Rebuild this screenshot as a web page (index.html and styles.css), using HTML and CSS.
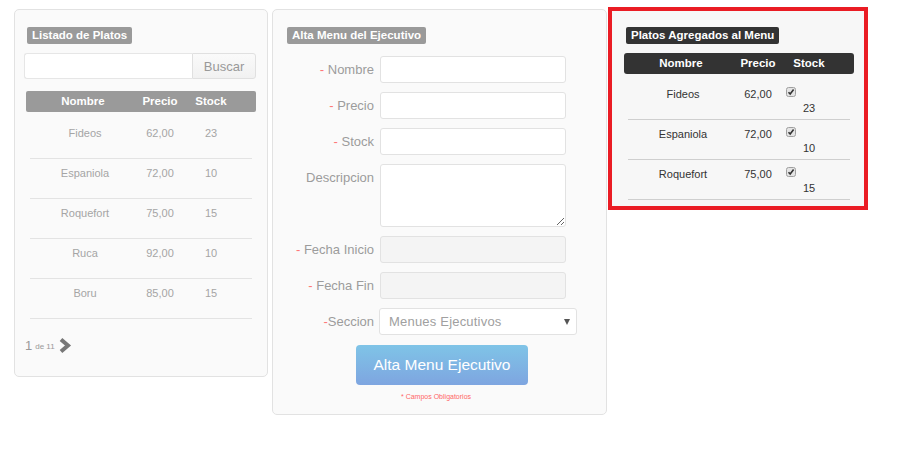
FILE: index.html
```html
<!DOCTYPE html>
<html lang="es">
<head>
<meta charset="utf-8">
<title>Menu Ejecutivo</title>
<link rel="stylesheet" href="styles.css">
</head>
<body>
<div class="page">
  <section class="panel list">
    <div class="badge">Listado de Platos</div>
    <div class="search">
      <input class="search-input" type="text">
      <button class="search-btn">Buscar</button>
    </div>
    <div class="table">
      <div class="thead">
        <span>Nombre</span><span>Precio</span><span>Stock</span>
      </div>
      <div class="tbody">
        <div class="row"><span>Fideos</span><span>62,00</span><span>23</span></div>
        <div class="row"><span>Espaniola</span><span>72,00</span><span>10</span></div>
        <div class="row"><span>Roquefort</span><span>75,00</span><span>15</span></div>
        <div class="row"><span>Ruca</span><span>92,00</span><span>10</span></div>
        <div class="row"><span>Boru</span><span>85,00</span><span>15</span></div>
      </div>
    </div>
    <div class="pager">
      <span class="pg-num">1</span><span class="pg-of">de 11</span>
      <svg class="pg-next" width="14" height="17" viewBox="0 0 14 17"><polyline points="3,2.5 10,8.5 3,14.5" fill="none" stroke="#777" stroke-width="4"/></svg>
    </div>
  </section>

  <section class="panel form">
    <div class="badge">Alta Menu del Ejecutivo</div>
    <div class="fields">
      <label class="field"><span class="lbl"><span class="req">-</span> Nombre</span><input class="inp" type="text"></label>
      <label class="field"><span class="lbl"><span class="req">-</span> Precio</span><input class="inp" type="text"></label>
      <label class="field"><span class="lbl"><span class="req">-</span> Stock</span><input class="inp" type="text"></label>
      <label class="field"><span class="lbl">Descripcion</span><textarea class="inp area"></textarea></label>
      <label class="field"><span class="lbl"><span class="req">-</span> Fecha Inicio</span><input class="inp" type="text" disabled></label>
      <label class="field"><span class="lbl"><span class="req">-</span> Fecha Fin</span><input class="inp" type="text" disabled></label>
      <div class="field"><span class="lbl"><span class="req">-</span>Seccion</span><div class="select">Menues Ejecutivos</div></div>
    </div>
    <button class="submit">Alta Menu Ejecutivo</button>
    <div class="note">* Campos Obligatorios</div>
  </section>

  <section class="panel added">
    <div class="badge dark">Platos Agregados al Menu</div>
    <div class="table">
      <div class="thead dark">
        <span>Nombre</span><span>Precio</span><span>Stock</span>
      </div>
      <div class="tbody">
        <div class="row"><span>Fideos</span><span>62,00</span><span class="stock"><span class="chk"><svg width="10" height="10" viewBox="0 0 10 10"><rect x="0.5" y="0.5" width="9" height="9" rx="2" fill="#e4e4e4" stroke="#a0a0a0"/><polyline points="2.5,5.2 4.2,7 7.6,2.6" fill="none" stroke="#333" stroke-width="1.6"/></svg></span><span class="qty">23</span></span></div>
        <div class="row"><span>Espaniola</span><span>72,00</span><span class="stock"><span class="chk"><svg width="10" height="10" viewBox="0 0 10 10"><rect x="0.5" y="0.5" width="9" height="9" rx="2" fill="#e4e4e4" stroke="#a0a0a0"/><polyline points="2.5,5.2 4.2,7 7.6,2.6" fill="none" stroke="#333" stroke-width="1.6"/></svg></span><span class="qty">10</span></span></div>
        <div class="row"><span>Roquefort</span><span>75,00</span><span class="stock"><span class="chk"><svg width="10" height="10" viewBox="0 0 10 10"><rect x="0.5" y="0.5" width="9" height="9" rx="2" fill="#e4e4e4" stroke="#a0a0a0"/><polyline points="2.5,5.2 4.2,7 7.6,2.6" fill="none" stroke="#333" stroke-width="1.6"/></svg></span><span class="qty">15</span></span></div>
      </div>
    </div>
  </section>
</div>
</body>
</html>
```

FILE: styles.css
```css
* { box-sizing: border-box; }
html, body { margin: 0; padding: 0; background: #fff; }
body {
  font-family: "Liberation Sans", Arial, sans-serif;
  color: #999;
}
.page {
  display: flex;
  align-items: flex-start;
  padding: 9px 0 0 14px;
}
.panel {
  background: #fafafa;
  border: 1px solid #e2e2e2;
  border-radius: 5px;
}
.badge {
  display: block;
  width: fit-content;
  background: #9a9a9a;
  color: #fff;
  font-weight: bold;
  font-size: 11.5px;
  line-height: 17px;
  height: 17px;
  padding: 0 5px;
  border-radius: 2px;
}
.badge.dark { background: #333; }

/* list panel */
.list {
  width: 254px;
  height: 368px;
  padding: 17px 11px 0 9px;
}
.list .badge { margin-left: 3px; }
.search {
  display: flex;
  margin-top: 9px;
  height: 26px;
}
.search-input {
  flex: 1;
  min-width: 0;
  height: 26px;
  margin: 0;
  border: 1px solid #e6e6e6;
  border-right: none;
  border-radius: 3px 0 0 3px;
  background: #fff;
}
.search-btn {
  width: 64px;
  height: 26px;
  margin: 0;
  border: 1px solid #e0e0e0;
  border-radius: 0 3px 3px 0;
  background: linear-gradient(#fafafa, #f1f1f1);
  font-family: "Liberation Sans", Arial, sans-serif;
  font-size: 13px;
  color: #999;
  padding: 0;
}
.table { font-size: 11px; }
.list .table { margin: 12px 0 0 2px; }
.thead {
  display: grid;
  grid-template-columns: 114px 40px 62px;
  height: 21px;
  line-height: 21px;
  background: #9a9a9a;
  color: #fff;
  font-weight: bold;
  font-size: 11.5px;
  text-align: center;
  border-radius: 2px;
}
.thead.dark { background: #333; border-radius: 3px; }
.tbody { padding-top: 6px; }
.list .tbody { padding-top: 7px; }
.row {
  display: grid;
  grid-template-columns: 110px 40px 62px;
  margin: 0 4px;
  height: 40px;
  padding-top: 7px;
  line-height: 14px;
  text-align: center;
  border-bottom: 1px solid #e3e3e3;
}
.list .row { color: #a5a5a5; }
.pager {
  display: flex;
  align-items: center;
  margin: 18px 0 0 1px;
  height: 16px;
}
.pg-num { font-size: 13px; color: #999; }
.pg-of { font-size: 8px; color: #999; margin-left: 3px; margin-top: 2px; }
.pg-next { margin-left: 3px; }

/* form panel */
.form {
  width: 335px;
  height: 406px;
  margin-left: 4px;
  padding: 17px 14px 0 14px;
}
.fields {
  display: flex;
  flex-direction: column;
  gap: 9px;
  margin-top: 12px;
}
.field {
  display: grid;
  grid-template-columns: 87px 186px;
  column-gap: 6px;
  align-items: start;
}
.lbl {
  text-align: right;
  font-size: 13px;
  line-height: 27px;
  color: #9c9c9c;
  white-space: nowrap;
}
.req { color: #f77; }
.inp {
  display: block;
  width: 186px;
  height: 27px;
  margin: 0;
  border: 1px solid #e2e2e2;
  border-radius: 3px;
  background: #fff;
  font-family: inherit;
}
.inp:disabled { background: #f4f4f4; }
.area { height: 63px; resize: vertical; }
.select {
  position: relative;
  width: 198px;
  height: 27px;
  margin-left: -1px;
  border: 1px solid #e2e2e2;
  border-radius: 3px;
  background: #fff;
  font-size: 13px;
  line-height: 25px;
  padding-left: 9px;
  color: #a0a0a0;
  letter-spacing: 0.2px;
}
.select::after {
  content: "";
  position: absolute;
  right: 6px;
  top: 10px;
  border-left: 3.5px solid transparent;
  border-right: 3.5px solid transparent;
  border-top: 6px solid #555;
}
.submit {
  display: block;
  width: 172px;
  height: 40px;
  margin: 10px 0 0 69px;
  border: none;
  border-radius: 4px;
  background: linear-gradient(#7fc4e7, #7ea5e0);
  color: #fff;
  font-family: "Liberation Sans", Arial, sans-serif;
  font-size: 15.5px;
  padding: 0;
}
.note {
  margin: 7px 0 0 114px;
  font-size: 7px;
  line-height: 10px;
  color: #f66;
}

/* added panel */
.added {
  width: 260px;
  height: 203px;
  margin: -2px 0 0 1px;
  border: 4px solid #ea1c24;
  border-radius: 0;
  background: #f7f7f7;
  padding: 16px 10px 0 12px;
}
.added .badge { margin-left: 2px; }
.added .table { margin-top: 9px; color: #333; }
.added .row { border-bottom-color: #cfcfcf; }
.stock {
  display: flex;
  flex-direction: column;
}
.chk {
  height: 14px;
  margin-left: 8px;
  text-align: left;
  line-height: 0;
}
.qty { line-height: 14px; }
```
